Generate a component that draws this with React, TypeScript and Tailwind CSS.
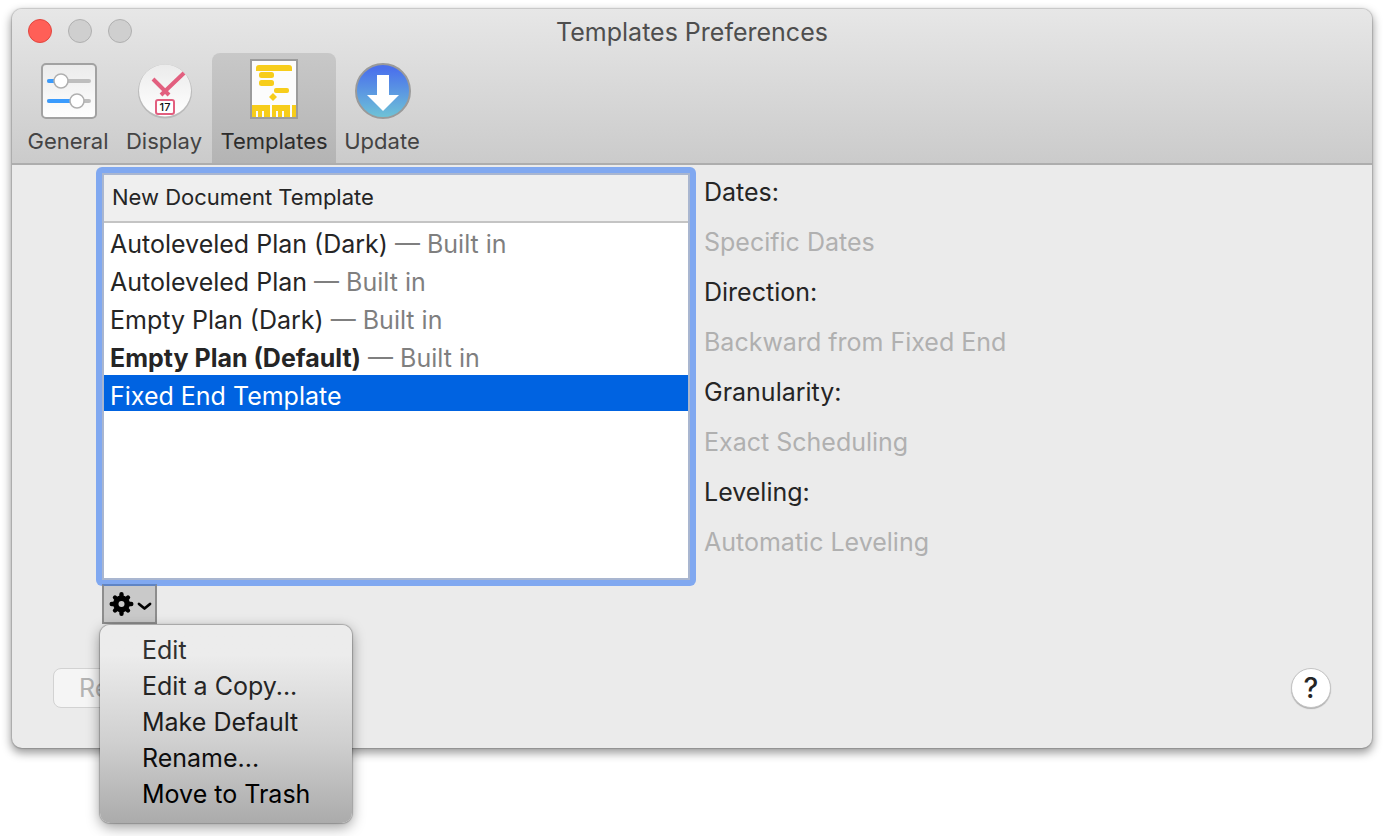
import React, { useState } from 'react';

const templates = [
  { name: 'Autoleveled Plan (Dark)', builtIn: true },
  { name: 'Autoleveled Plan', builtIn: true },
  { name: 'Empty Plan (Dark)', builtIn: true },
  { name: 'Empty Plan (Default)', builtIn: true, isDefault: true },
  { name: 'Fixed End Template', builtIn: false },
];

const details = [
  { label: 'Dates:', value: 'Specific Dates' },
  { label: 'Direction:', value: 'Backward from Fixed End' },
  { label: 'Granularity:', value: 'Exact Scheduling' },
  { label: 'Leveling:', value: 'Automatic Leveling' },
];

const menuItems = [
  { label: 'Edit', color: 'text-[#303030]' },
  { label: 'Edit a Copy...', color: 'text-[#262626]' },
  { label: 'Make Default', color: 'text-[#1c1c1c]' },
  { label: 'Rename...', color: 'text-[#0e0e0e]' },
  { label: 'Move to Trash', color: 'text-black' },
];

const GeneralIcon = () => (
  <svg width="60" height="64" viewBox="0 0 60 64" aria-hidden="true">
    <defs>
      <linearGradient id="generalBg" x1="0" y1="0" x2="0" y2="1">
        <stop offset="0" stopColor="#ebebeb" />
        <stop offset="1" stopColor="#ffffff" />
      </linearGradient>
    </defs>
    <rect x="4" y="7" width="54" height="54" rx="4" fill="url(#generalBg)" stroke="#a2a2a2" strokeWidth="2" />
    <g strokeWidth="4" strokeLinecap="round">
      <path d="M11 24H51" stroke="#bebebe" />
      <path d="M11 24H21" stroke="#3a9bfd" />
      <path d="M11 44H51" stroke="#bebebe" />
      <path d="M11 44H37" stroke="#3a9bfd" />
    </g>
    <circle cx="23" cy="24" r="7" fill="#fff" stroke="#b0b0b0" strokeWidth="1.5" />
    <circle cx="39" cy="44" r="7" fill="#fff" stroke="#b0b0b0" strokeWidth="1.5" />
  </svg>
);

const DisplayIcon = () => (
  <svg width="60" height="64" viewBox="0 0 60 64" aria-hidden="true">
    <defs>
      <linearGradient id="displayBg" x1="0" y1="0" x2="0" y2="1">
        <stop offset="0" stopColor="#ebebeb" />
        <stop offset="1" stopColor="#ffffff" />
      </linearGradient>
    </defs>
    <circle cx="31" cy="34.5" r="27" fill="#a8a8a8" opacity="0.6" />
    <circle cx="31" cy="33.5" r="26" fill="url(#displayBg)" />
    <path d="M19 22L35 38M50 16L27 38" stroke="#e25f7f" strokeWidth="4" fill="none" />
    <rect x="22" y="43" width="18" height="14" rx="2" fill="#fff" stroke="#e25f7f" strokeWidth="2" />
    <text x="31" y="54" textAnchor="middle" fontSize="11" fontWeight="500" fill="#111">17</text>
  </svg>
);

const TemplatesIcon = () => (
  <svg width="60" height="64" viewBox="0 0 60 64" aria-hidden="true">
    <rect x="7" y="3" width="46" height="58" fill="#fcfcfc" stroke="#9c9c9c" strokeWidth="2" />
    <g fill="#f7cd1b">
      <path d="M12 11Q12 8 15 8H45Q48 8 48 11V14H12Z" />
      <rect x="15" y="15" width="15" height="6" rx="2.5" />
      <rect x="15" y="23" width="15" height="6" rx="2.5" />
      <rect x="30" y="31" width="15" height="5" rx="2" />
      <path d="M29 36L33 40L29 44L25 40Z" />
      <rect x="8" y="48" width="44" height="12" />
    </g>
    <g fill="#fcfcfc">
      <rect x="26" y="48" width="2" height="12" />
      <rect x="46" y="48" width="2" height="12" />
      <rect x="12" y="54" width="2" height="6" />
      <rect x="18" y="54" width="2" height="6" />
      <rect x="32" y="54" width="2" height="6" />
      <rect x="38" y="54" width="2" height="6" />
    </g>
  </svg>
);

const UpdateIcon = () => (
  <svg width="60" height="64" viewBox="0 0 60 64" aria-hidden="true">
    <defs>
      <linearGradient id="updateBg" x1="0" y1="0" x2="0" y2="1">
        <stop offset="0.08" stopColor="#4a70ec" />
        <stop offset="1" stopColor="#6fc4d6" />
      </linearGradient>
    </defs>
    <circle cx="31" cy="34" r="27" fill="url(#updateBg)" stroke="#9a9a9a" strokeWidth="2" />
    <path d="M25 18H37V38H47L31 54L15 38H25Z" fill="#fff" />
  </svg>
);

const tabs = [
  { name: 'General', icon: GeneralIcon, width: 'w-24' },
  { name: 'Display', icon: DisplayIcon, width: 'w-24' },
  { name: 'Templates', icon: TemplatesIcon, width: 'w-[124px]' },
  { name: 'Update', icon: UpdateIcon, width: 'w-[92px]' },
];

const GearIcon = () => (
  <svg width="44" height="28" viewBox="0 0 44 28" aria-hidden="true">
    <g stroke="#000" strokeWidth="4.4" strokeLinecap="round">
      <path d="M13.5 4.2V23.8M3.7 14H23.3M7 7.5L20 20.5M20 7.5L7 20.5" />
    </g>
    <circle cx="13.5" cy="14" r="8.4" fill="#000" />
    <circle cx="13.5" cy="14" r="3" fill="#c9c9c9" />
    <path d="M31 14L36.5 18.5L42 14" stroke="#000" strokeWidth="2.8" fill="none" strokeLinecap="round" strokeLinejoin="round" />
  </svg>
);

const App: React.FC = () => {
  const [activeTab, setActiveTab] = useState('Templates');
  const [selected, setSelected] = useState('Fixed End Template');
  const [menuOpen, setMenuOpen] = useState(true);

  return (
    <div className="min-h-screen bg-white px-3 pt-[9px] font-['Inter',sans-serif] text-[25px] leading-9 text-[#252525]">
      <div className="rounded-[10px] bg-[#ebebeb] shadow-[0_0_1px_1px_rgba(0,0,0,0.15),0_4px_10px_1px_rgba(0,0,0,0.4)]">
        <header className="rounded-t-[10px] border-b-2 border-[#adadad] bg-linear-to-b from-[#e7e7e7] to-[#cbcbcb]">
          {/* Title bar */}
          <div className="grid h-11 grid-cols-[1fr_auto_1fr] items-center">
            <div className="flex gap-4 pl-4">
              <button aria-label="Close" className="size-6 rounded-full border border-[#e2463f] bg-[#ff5f57]"></button>
              <button aria-label="Minimize" className="size-6 rounded-full border border-[#b0b0b0] bg-[#cfcfcf]"></button>
              <button aria-label="Zoom" className="size-6 rounded-full border border-[#b0b0b0] bg-[#cfcfcf]"></button>
            </div>
            <h1 className="pt-[2px] text-[#4e4e4e]">Templates Preferences</h1>
          </div>

          {/* Toolbar */}
          <nav className="flex pl-2">
            {tabs.map((tab) => {
              const Icon = tab.icon;
              return (
                <button
                  key={tab.name}
                  onClick={() => setActiveTab(tab.name)}
                  className={`flex h-[110px] flex-col items-center rounded-t-lg pt-1 text-[22px] leading-10 ${tab.width} ${
                    activeTab === tab.name ? 'bg-linear-to-b from-[#c8c8c8] to-[#b4b4b4] text-[#2c2c2c]' : 'text-[#444444]'
                  }`}
                >
                  <Icon />
                  {tab.name}
                </button>
              );
            })}
          </nav>
        </header>

        <main className="flex gap-2 pt-[2px] pl-[84px]">
          <div className="w-[600px]">
            {/* Template list */}
            <div className="h-[419px] rounded-[6px] bg-[#80a8f0] p-[6px]">
              <div className="h-full border-2 border-[#a9b6d0] bg-white">
                <table className="w-full border-collapse text-left">
                  <thead>
                    <tr>
                      <th className="h-[47px] border-b-2 border-[#c4c4c4] bg-[#efefef] px-2 pb-[2px] text-[22px] font-normal">
                        New Document Template
                      </th>
                    </tr>
                  </thead>
                  <tbody>
                    {templates.map((template) => (
                      <tr
                        key={template.name}
                        onClick={() => setSelected(template.name)}
                        className={selected === template.name ? 'text-white' : ''}
                      >
                        <td className="p-0 pb-[2px]">
                          <div className={`px-[6px] pt-[6px] leading-[30px] ${selected === template.name ? 'bg-[#0063e1]' : ''}`}>
                            <span className={template.isDefault ? 'font-bold' : ''}>{template.name}</span>
                            {template.builtIn && <span className="text-[#7f7f7f]"> — Built in</span>}
                          </div>
                        </td>
                      </tr>
                    ))}
                  </tbody>
                </table>
              </div>
            </div>

            {/* Action menu */}
            <div className="relative -mt-[2px] ml-[6px] w-[55px]">
              <button
                aria-label="Template actions"
                aria-expanded={menuOpen}
                onClick={() => setMenuOpen(!menuOpen)}
                className="flex h-10 w-[55px] items-center justify-center border-2 border-[#8d8d8d] border-t-[#5f84c4] bg-[#c9c9c9]"
              >
                <GearIcon />
              </button>
              {menuOpen && (
                <div
                  role="menu"
                  className="absolute top-[41px] -left-[2px] z-10 flex w-[252px] flex-col rounded-[10px] bg-linear-to-b from-[#ececec] from-15% via-[#cfcfcf] via-60% to-[#ababab] pt-[7px] pb-[11px] shadow-[0_0_1px_1px_rgba(0,0,0,0.22),0_4px_14px_rgba(0,0,0,0.4)]"
                >
                  {menuItems.map((item) => (
                    <button key={item.label} role="menuitem" className={`pl-[42px] text-left ${item.color}`}>
                      {item.label}
                    </button>
                  ))}
                </div>
              )}
            </div>
          </div>

          <dl className="leading-[50px]">
            {details.map((detail) => (
              <div key={detail.label}>
                <dt>{detail.label}</dt>
                <dd className="text-[#b0b0b0]">{detail.value}</dd>
              </div>
            ))}
          </dl>
        </main>

        <footer className="flex items-center justify-between px-[41px] pt-11 pb-10">
          <button disabled className="h-10 rounded-lg border border-[#d2d2d2] bg-[#f5f5f5] px-[25px] text-[#b3b3b3]">
            Reset
          </button>
          <button
            aria-label="Help"
            className="size-10 rounded-full border border-[#c4c4c4] bg-white text-[28px] font-medium shadow-[0_1px_1px_rgba(0,0,0,0.25)]"
          >
            ?
          </button>
        </footer>
      </div>
    </div>
  );
};

export default App;
